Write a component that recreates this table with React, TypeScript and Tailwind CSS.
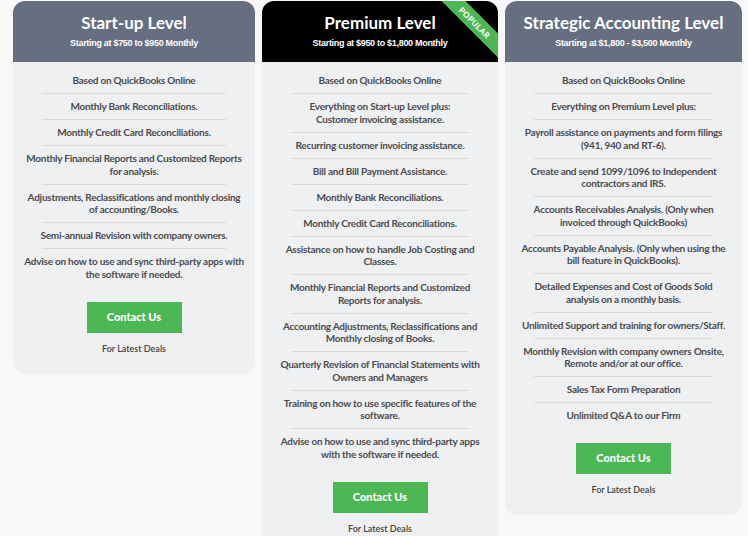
import React from 'react';

type Plan = {
  title: string;
  price: string;
  dark?: boolean;
  popular?: boolean;
  width: string;
  items: string[][];
};

const plans: Plan[] = [
  {
    title: 'Start-up Level',
    price: 'Starting at $750 to $950 Monthly',
    width: 'w-[242px]',
    items: [
      ['Based on QuickBooks Online'],
      ['Monthly Bank Reconciliations.'],
      ['Monthly Credit Card Reconciliations.'],
      ['Monthly Financial Reports and Customized Reports', 'for analysis.'],
      ['Adjustments, Reclassifications and monthly closing', 'of accounting/Books.'],
      ['Semi-annual Revision with company owners.'],
      ['Advise on how to use and sync third-party apps with', 'the software if needed.'],
    ],
  },
  {
    title: 'Premium Level',
    price: 'Starting at $950 to $1,800 Monthly',
    dark: true,
    popular: true,
    width: 'w-[236px]',
    items: [
      ['Based on QuickBooks Online'],
      ['Everything on Start-up Level plus:', 'Customer invoicing assistance.'],
      ['Recurring customer invoicing assistance.'],
      ['Bill and Bill Payment Assistance.'],
      ['Monthly Bank Reconciliations.'],
      ['Monthly Credit Card Reconciliations.'],
      ['Assistance on how to handle Job Costing and', 'Classes.'],
      ['Monthly Financial Reports and Customized', 'Reports for analysis.'],
      ['Accounting Adjustments, Reclassifications and', 'Monthly closing of Books.'],
      ['Quarterly Revision of Financial Statements with', 'Owners and Managers'],
      ['Training on how to use specific features of the', 'software.'],
      ['Advise on how to use and sync third-party apps', 'with the software if needed.'],
    ],
  },
  {
    title: 'Strategic Accounting Level',
    price: 'Starting at $1,800 - $3,500 Monthly',
    width: 'w-[237px]',
    items: [
      ['Based on QuickBooks Online'],
      ['Everything on Premium Level plus:'],
      ['Payroll assistance on payments and form filings', '(941, 940 and RT-6).'],
      ['Create and send 1099/1096 to Independent', 'contractors and IRS.'],
      ['Accounts Receivables Analysis. (Only when', 'invoiced through QuickBooks)'],
      ['Accounts Payable Analysis. (Only when using the', 'bill feature in QuickBooks).'],
      ['Detailed Expenses and Cost of Goods Sold', 'analysis on a monthly basis.'],
      ['Unlimited Support and training for owners/Staff.'],
      ['Monthly Revision with company owners Onsite,', 'Remote and/or at our office.'],
      ['Sales Tax Form Preparation'],
      ['Unlimited Q&A to our Firm'],
    ],
  },
];

const PlanCard: React.FC<{ plan: Plan }> = ({ plan }) => (
  <div className={`${plan.width} shrink-0 self-start rounded-[12px] bg-[#eff0f2] overflow-hidden`}>
    <div
      className={`relative h-[61px] flex flex-col items-center pt-[11px] text-white ${
        plan.dark ? 'bg-black' : 'bg-[#656f80]'
      }`}
    >
      <div className="text-[17px] leading-[22px] font-bold font-['Lato',sans-serif]">{plan.title}</div>
      <div className="mt-[3px] text-[9px] leading-[12px] font-bold tracking-[-0.3px] font-['Liberation_Sans',Arial,sans-serif]">
        {plan.price}
      </div>
      {plan.popular && (
        // corner ribbon
        <div className="absolute top-0 right-0 w-[80px] h-[80px] overflow-hidden">
          <div className="absolute left-[-3px] top-[13px] w-[120px] h-[17px] rotate-45 bg-[#4cb854] flex items-center justify-center text-[8px] font-black tracking-[0.4px] font-['Lato',sans-serif] text-white">
            POPULAR
          </div>
        </div>
      )}
    </div>
    <div className="pt-[6px] pb-[19px] flex flex-col items-center font-['Lato',sans-serif]">
      {plan.items.map((lines, i) => (
        <React.Fragment key={i}>
          {i > 0 && <div className="self-stretch mx-[29px] h-px bg-[#d9dadd]" />}
          <div className="px-[8px] py-[6.25px] text-center text-[10px] leading-[12.5px] font-bold tracking-[-0.25px] text-[#4b4c50]">
            {lines.map((l, j) => (
              <div key={j} className="whitespace-nowrap">{l}</div>
            ))}
          </div>
        </React.Fragment>
      ))}
      <button className="mt-[15px] w-[95px] h-[31px] bg-[#4cb854] text-white text-[11px] font-black">
        Contact Us
      </button>
      <div className="mt-[10px] text-[9px] leading-[12px] font-semibold text-[#444]">For Latest Deals</div>
    </div>
  </div>
);

export default function App() {
  return (
    <div className="w-[748px] h-[536px] overflow-hidden bg-[#f8f8f8]">
      <div className="flex gap-[7px] pl-[13px] pt-[1px]">
        {plans.map((p) => (
          <PlanCard key={p.title} plan={p} />
        ))}
      </div>
    </div>
  );
}
